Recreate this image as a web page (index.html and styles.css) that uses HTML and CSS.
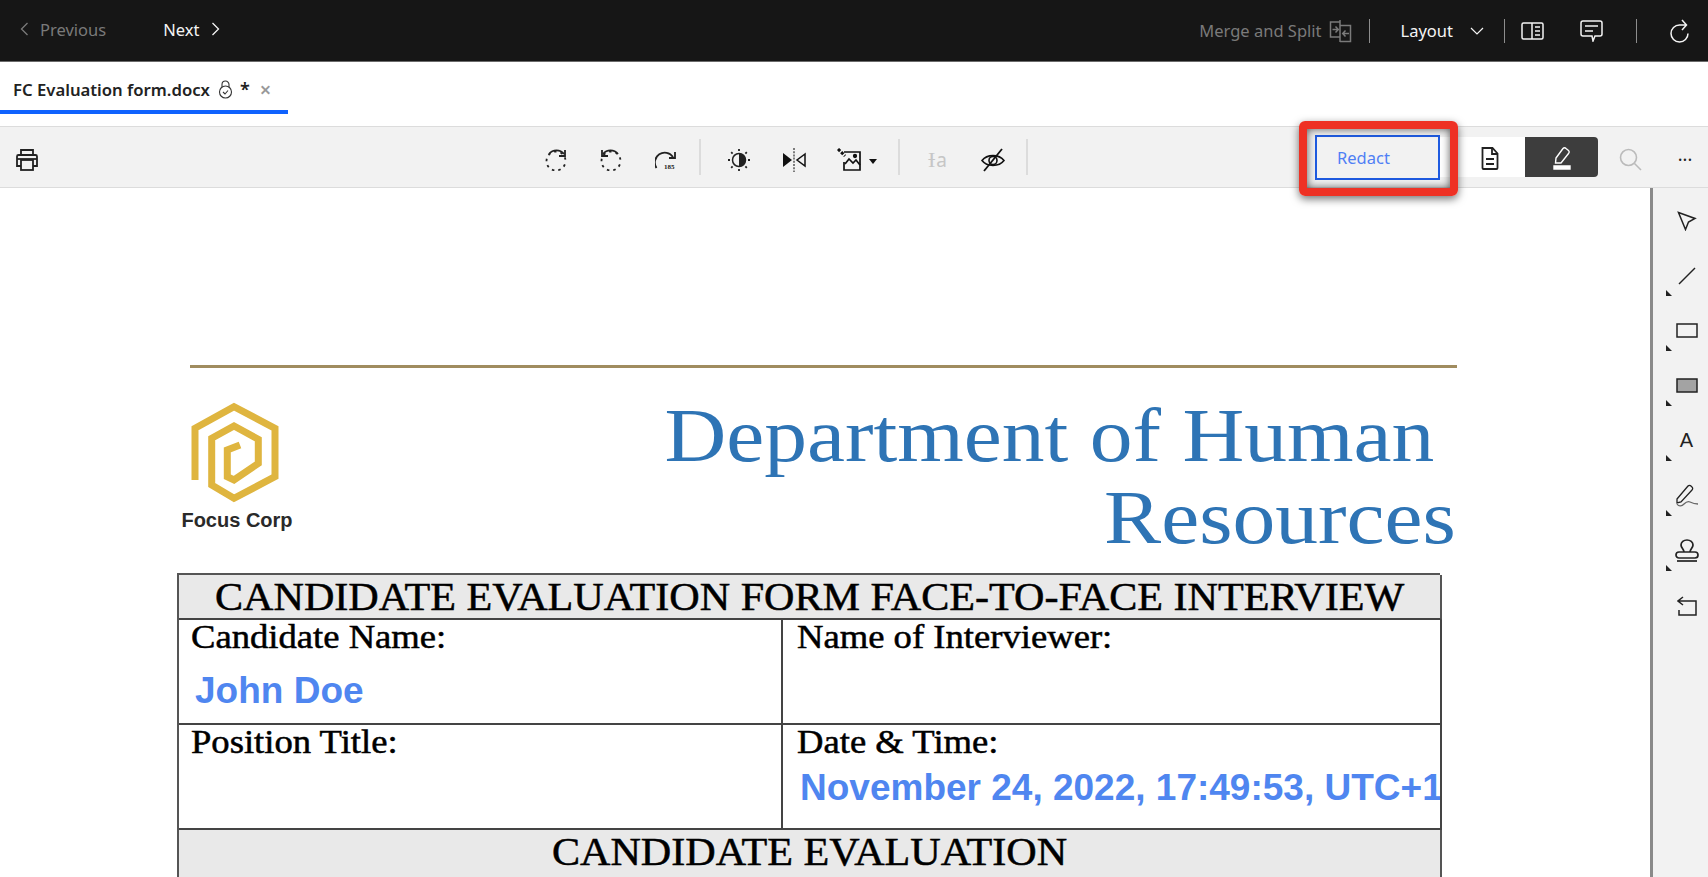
FILE: index.html
```html
<!DOCTYPE html>
<html lang="en">
<head>
  <meta charset="UTF-8">
  <title>FC Evaluation form.docx</title>
  <link rel="stylesheet" href="styles.css">
</head>
<body>
  <div class="app">
    <header class="topbar">
      <a class="nav-link muted prev"><svg width="9" height="14" viewBox="0 0 9 14"><path d="M7.500 1 1.500 7l6 6" fill="none" stroke="currentColor" stroke-width="1.300"/></svg><span>Previous</span></a>
      <a class="nav-link next"><span>Next</span><svg width="9" height="14" viewBox="0 0 9 14"><path d="M1.500 1l6 6-6 6" fill="none" stroke="currentColor" stroke-width="1.300"/></svg></a>

      <div class="top-right">
        <span class="muted merge-label">Merge and Split</span>
        <svg class="muted merge-icon" width="23" height="24" viewBox="0 0 23 24" fill="none" stroke="currentColor" stroke-width="1.500"><path d="M11 3H1.500v15H11M11 1v22M11 6.500h10.500v16H11"/><path d="M3.500 10.500H9M6.500 7.500l2.800 3-2.800 3M20 14.500h-6M16.500 11.500l-2.800 3 2.800 3"/></svg>
        <i class="top-sep"></i>
        <span class="layout-label">Layout</span>
        <svg class="layout-chevron" width="14" height="8" viewBox="0 0 14 8"><path d="M1 1l6 6 6-6" fill="none" stroke="currentColor" stroke-width="1.200"/></svg>
        <i class="top-sep"></i>
        <svg class="panel-icon" width="23" height="18" viewBox="0 0 23 18" fill="none" stroke="currentColor" stroke-width="1.500"><rect x="1" y="1" width="21" height="16" rx="1.500"/><path d="M11 1v16M14 5h5M14 9h5M14 13h5"/></svg>
        <svg class="comment-icon" width="23" height="22" viewBox="0 0 23 22" fill="none" stroke="currentColor" stroke-width="1.500"><path d="M3 1h17a2 2 0 0 1 2 2v11a2 2 0 0 1-2 2h-5l-2 5-1-5H3a2 2 0 0 1-2-2V3a2 2 0 0 1 2-2z"/><path d="M5 6h13M5 11h8"/></svg>
        <i class="top-sep"></i>
        <svg class="refresh-icon" width="20" height="25" viewBox="0 0 20 25" fill="none" stroke="currentColor" stroke-width="1.500"><path d="M18 15.500A8.500 8.500 0 1 1 9.500 7H16M12 2l4.500 5L12 12"/></svg>
      </div>
    </header>

    <div class="tabrow">
      <div class="tab">
        <span class="tab-name">FC Evaluation form.docx</span>
        <svg class="tab-lock" width="15" height="19" viewBox="0 0 15 19" fill="none" stroke="#333" stroke-width="1.100"><path d="M4 7V4.500a3.500 3.500 0 0 1 7 0V7"/><circle cx="7.500" cy="12" r="6"/><path d="M5 12l2 2 3-3.500"/></svg>
        <span class="tab-star">*</span>
        <span class="tab-close">×</span>
      </div>
    </div>

    <div class="toolbar">
      <div class="tool print"><svg width="24" height="24" viewBox="0 0 24 24" fill="none" stroke="#222" stroke-width="1.800"><path d="M6 7V2h12v5M6 18H2V8.500A1.500 1.500 0 0 1 3.500 7h17A1.500 1.500 0 0 1 22 8.500V18h-4"/><path d="M2 11h20"/><rect x="6" y="12" width="12" height="10"/></svg></div>

      <div class="tool-group">
        <div class="tool"><svg width="22" height="22" viewBox="0 0 22 22" fill="none" stroke="#222" stroke-width="1.800"><path d="M4 5a9.500 9.500 0 0 1 15 0"/><path d="M20 1v6h-6"/><circle cx="11" cy="12" r="9.500" stroke-dasharray="2.500 4" stroke-dashoffset="-10"/></svg></div>
        <div class="tool"><svg width="22" height="22" viewBox="0 0 22 22" fill="none" stroke="#222" stroke-width="1.800"><path d="M18 5A9.500 9.500 0 0 0 3 5"/><path d="M2 1v6h6"/><circle cx="11" cy="12" r="9.500" stroke-dasharray="2.500 4" stroke-dashoffset="-10"/></svg></div>
        <div class="tool"><svg width="22" height="20" viewBox="0 0 22 20" fill="none" stroke="#222" stroke-width="1.800"><path d="M1.500 18A9 9 0 0 1 18 7"/><path d="M20 2v6h-6"/><text class="angle-label" x="9" y="19">185</text></svg></div>
        <i class="tool-sep"></i>
      </div>

      <div class="tool-group">
        <div class="tool"><svg width="24" height="24" viewBox="0 0 24 24"><circle cx="12" cy="12" r="6.500" fill="none" stroke="#222" stroke-width="1.500"/><path d="M12 5.500a6.500 6.500 0 0 1 0 13z" fill="#222"/><path d="M12 1v2M12 21v2M1 12h2M21 12h2M4.200 4.200l1.400 1.400M18.400 18.400l1.400 1.400M4.200 19.800l1.400-1.400M18.400 5.600l1.400-1.400" stroke="#222" stroke-width="1.800"/></svg></div>
        <div class="tool"><svg width="24" height="24" viewBox="0 0 24 24"><path d="M1 5l9 7-9 7z" fill="#111"/><path d="M23 6l-8 6 8 6z" fill="none" stroke="#111" stroke-width="1.500"/><path d="M12 0v24" stroke="#555" stroke-width="1.500" stroke-dasharray="2 1.200"/></svg></div>
        <div class="tool tool-wide">
          <svg width="24" height="24" viewBox="0 0 24 24" fill="none" stroke="#111" stroke-width="1.700"><path d="M7 4h16v18H7v-8"/><path d="M8 16l4-5 4 4 3-3 4 5"/><circle cx="18" cy="8" r="1.300" fill="#111"/><path d="M1 1l7 7" stroke-width="3" stroke-dasharray="3 1.500"/></svg>
          <i class="caret"></i>
        </div>
        <i class="tool-sep"></i>
      </div>

      <div class="tool-group">
        <div class="tool font-tool"><span class="cursor-bar">Ɨ</span><span>a</span></div>
        <div class="tool"><svg width="24" height="24" viewBox="0 0 24 24" fill="none" stroke="#111" stroke-width="1.600"><path d="M1 12.500C6 6 18 6 23 12.500 18 19 6 19 1 12.500z"/><circle cx="12" cy="12.500" r="4"/><path d="M3 23 21 1" stroke-width="1.800"/></svg></div>
        <i class="tool-sep"></i>
      </div>

      <div class="tool-right">
        <div class="redact-wrap">
          <div class="redact-btn">Redact</div>
          <div class="redact-highlight"></div>
        </div>
        <div class="mode mode-doc"><svg width="18" height="23" viewBox="0 0 18 23" fill="none" stroke="#222" stroke-width="1.800"><path d="M1.500 1h10l5 5.500V21a1 1 0 0 1-1 1h-13a1 1 0 0 1-1-1z"/><path d="M11 1v6h6M5 12h8M5 17h8"/></svg></div>
        <div class="mode mode-redact"><svg width="18" height="24" viewBox="0 0 18 24" fill="none" stroke="#fff" stroke-width="1.400"><path d="M3 12 10 2.500a2 2 0 0 1 3 0l2.500 2a2 2 0 0 1 0 3L8 17H2.500z"/><path d="M1 20h16v3H1z" fill="#fff"/></svg></div>
        <div class="search-tool"><svg width="23" height="23" viewBox="0 0 23 23" fill="none" stroke="#bbb" stroke-width="1.600"><circle cx="9.500" cy="9.500" r="8"/><path d="M15.500 15.500 22 22"/></svg></div>
        <div class="more-tool">···</div>
      </div>
    </div>

    <div class="workspace">
      <main class="doc">
        <div class="doc-rule"></div>
        <div class="doc-head">
          <div class="logo">
            <svg width="90" height="102" viewBox="0 0 90 102"><path d="M5 78V26.300L44 4.700 85 26.300V74.700L44 96.300 21.700 83V36.300L44 24 68.300 37.300V61.300L44 78 37.300 74.700V48L50 43" fill="none" stroke="#dfb53f" stroke-width="7"/></svg>
            <div class="logo-name">Focus Corp</div>
          </div>
          <h1 class="doc-title">Department of Human&nbsp;<br>Resources</h1>
        </div>

        <div class="form-table">
          <div class="cell-band"><span class="band-text">CANDIDATE EVALUATION FORM FACE-TO-FACE INTERVIEW</span></div>
          <div class="cell">
            <div class="field-label">Candidate Name:</div>
            <div class="field-value name-value">John Doe</div>
          </div>
          <div class="cell cell-right">
            <div class="field-label">Name of Interviewer:</div>
          </div>
          <div class="cell">
            <div class="field-label">Position Title:</div>
          </div>
          <div class="cell cell-right">
            <div class="field-label">Date &amp; Time:</div>
            <div class="field-value date-value">November 24, 2022, 17:49:53, UTC+1</div>
          </div>
          <div class="cell-band section-band"><span class="band-text">CANDIDATE EVALUATION</span></div>
        </div>
      </main>

      <aside class="sidetools">
        <div class="side-tool"><svg width="20" height="20" viewBox="0 0 20 20" fill="none" stroke="#222" stroke-width="1.500"><path d="M1.500 1.500 18 7.500l-6.500 3.500-3 7.500z"/></svg></div>
        <div class="side-tool has-flyout"><svg width="20" height="20" viewBox="0 0 20 20" fill="none" stroke="#222" stroke-width="1.500"><path d="M2 18 18 2"/></svg></div>
        <div class="side-tool has-flyout"><svg width="22" height="15" viewBox="0 0 22 15" fill="none" stroke="#222" stroke-width="1.500"><rect x="1" y="1" width="20" height="13"/></svg></div>
        <div class="side-tool has-flyout"><svg width="22" height="15" viewBox="0 0 22 15" fill="#a3a3a3" stroke="#222" stroke-width="1.500"><rect x="1" y="1" width="20" height="13"/></svg></div>
        <div class="side-tool has-flyout side-letter">A</div>
        <div class="side-tool has-flyout"><svg width="24" height="24" viewBox="0 0 24 24" fill="none" stroke="#222" stroke-width="1.300"><path d="M2 15 13 2a2 2 0 0 1 3 0l1 1a2 2 0 0 1 0 3L6 18l-4 1z"/><path d="M2 20c2 3 5 2 7 0s4-3 6-2 4 2 8 2" stroke="#666"/></svg></div>
        <div class="side-tool has-flyout"><svg width="24" height="24" viewBox="0 0 24 24" fill="none" stroke="#222" stroke-width="1.700"><path d="M9 13c0-3-3-4-3-7a6 5 0 0 1 12 0c0 3-3 4-3 7"/><rect x="1" y="13" width="22" height="6" rx="3"/><path d="M2 22h20"/></svg></div>
        <div class="side-tool"><svg width="20" height="20" viewBox="0 0 20 20" fill="none" stroke="#222" stroke-width="1.500"><path d="M6 1 1 5l5 4M1 5h18v14H2v-5"/></svg></div>
      </aside>
    </div>
  </div>
</body>
</html>
```

FILE: styles.css
```css
* {
  box-sizing: border-box;
}

body {
  margin: 0;
  background: #fff;
  font-family: "Noto Sans", Arial, sans-serif;
  overflow: hidden;
}

.app {
  display: flex;
  flex-direction: column;
  height: 877px;
}

/* top bar */
.topbar {
  display: flex;
  align-items: center;
  height: 62px;
  flex-shrink: 0;
  background: #161616;
  border-bottom: 1px solid #6b6b6b;
  color: #f4f4f4;
  font-size: 16.500px;
}

.muted {
  color: #7a7a7a;
}

.nav-link {
  display: flex;
  align-items: center;
  gap: 11px;
  padding-bottom: 3px;
}

.prev {
  margin-left: 20px;
}

.next {
  margin-left: 57px;
  gap: 12px;
}

.top-right {
  display: flex;
  align-items: center;
  margin-left: auto;
  padding-right: 18px;
}

.merge-label {
  margin-right: -1px;
}

.merge-icon {
  margin-left: 8px;
}

.top-sep {
  width: 1px;
  height: 24px;
  background: #8d8d8d;
  margin-left: 17px;
}

.layout-label {
  margin-left: 31px;
}

.layout-chevron {
  margin-left: 17px;
  margin-right: 3px;
}

.panel-icon {
  margin-left: 16px;
}

.comment-icon {
  margin-left: 36px;
  margin-right: 16px;
}

.refresh-icon {
  margin-left: 33px;
}

/* tab row */
.tabrow {
  height: 65px;
  flex-shrink: 0;
  background: #fff;
  border-bottom: 1px solid #dcdcdc;
}

.tab {
  display: flex;
  align-items: center;
  width: 288px;
  height: 52px;
  padding: 6px 0 0 13px;
  border-bottom: 4px solid #0f62fe;
  color: #222;
}

.tab-name {
  font-size: 16.700px;
  font-weight: 600;
}

.tab-lock {
  margin-left: 8px;
}

.tab-star {
  margin-left: 7px;
  font-size: 18px;
  font-weight: 600;
}

.tab-close {
  margin-left: 10px;
  color: #999;
  font-size: 20px;
  font-weight: 600;
}

/* toolbar */
.toolbar {
  display: flex;
  align-items: center;
  height: 61px;
  flex-shrink: 0;
  background: #f2f2f2;
  border-bottom: 1px solid #dcdcdc;
}

.tool {
  display: flex;
  align-items: center;
  justify-content: center;
  width: 55px;
  height: 40px;
  padding-top: 6px;
}

.print {
  width: 24px;
  margin-left: 15px;
  margin-right: 489px;
}

.tool-group {
  display: flex;
  align-items: center;
}

.tool-wide {
  width: 71px;
  justify-content: flex-start;
  padding-left: 16px;
}

.tool-sep {
  width: 2px;
  height: 36px;
  background: #dcdcdc;
  margin: 0 10px 0 6px;
}

.angle-label {
  fill: #222;
  stroke: none;
  font-family: "Liberation Serif", serif;
  font-size: 7px;
  font-weight: 700;
}

.caret {
  width: 0;
  height: 0;
  margin-left: 8px;
  margin-top: 3px;
  border-left: 4.500px solid transparent;
  border-right: 4.500px solid transparent;
  border-top: 5px solid #111;
}

.font-tool {
  color: #c6c6c6;
  font-size: 19px;
  gap: 1px;
}

.cursor-bar {
  font-family: "Liberation Serif", serif;
  font-size: 22px;
}

.tool-right {
  display: flex;
  align-items: center;
  margin-left: auto;
}

.redact-wrap {
  position: relative;
}

.redact-btn {
  display: flex;
  align-items: center;
  width: 125px;
  height: 45px;
  padding-left: 20px;
  border: 2px solid #1f5be0;
  color: #4f7ff5;
  font-size: 16.500px;
}

.redact-highlight {
  position: absolute;
  top: -14px;
  right: -18px;
  bottom: -16px;
  left: -16px;
  border: 8px solid #ee3124;
  border-radius: 6px;
  box-shadow: 0 3px 9px rgba(0, 0, 0, 0.55), inset 0 0 9px rgba(0, 0, 0, 0.65);
}

.mode {
  display: flex;
  align-items: center;
  justify-content: center;
  height: 40px;
  padding-top: 2px;
}

.mode-doc {
  width: 85px;
  padding-left: 14px;
  background: #fff;
}

.mode-redact {
  width: 73px;
  background: #3d3d3d;
  border-radius: 0 4px 4px 0;
}

.search-tool {
  display: flex;
  justify-content: center;
  width: 64px;
  padding-top: 4px;
}

.more-tool {
  width: 46px;
  padding-top: 4px;
  text-align: center;
  color: #222;
  font-size: 18px;
}

/* workspace */
.workspace {
  display: flex;
  flex: 1;
  min-height: 0;
}

.doc {
  flex: 1;
  min-width: 0;
  overflow: hidden;
  padding: 177px 0 0 177px;
  background: #fff;
}

.doc-rule {
  width: 1267px;
  height: 3px;
  margin-left: 13px;
  background: #a08c5f;
}

.doc-head {
  display: flex;
  justify-content: space-between;
  width: 1279px;
  height: 205px;
}

.logo {
  width: 120px;
  padding-top: 34px;
  text-align: center;
}

.logo svg {
  display: block;
  margin-left: 13px;
}

.logo-name {
  margin-top: 5px;
  color: #2a2a2a;
  font-family: "Liberation Sans", Arial, sans-serif;
  font-size: 20px;
  font-weight: 700;
}

.doc-title {
  margin: 26px 0 0;
  color: #2e74b5;
  font-family: "Liberation Serif", serif;
  font-size: 76px;
  font-weight: 400;
  line-height: 82px;
  text-align: right;
  white-space: nowrap;
  transform: scaleX(1.126);
  transform-origin: right center;
}

.form-table {
  display: grid;
  grid-template-columns: 604px 659px;
  grid-template-rows: 45px 105px 105px 60px;
  width: 1263px;
  border-top: 2px solid #555;
  border-left: 2px solid #555;
  color: #000;
  font-family: "Liberation Serif", serif;
}

.cell-band {
  grid-column: 1 / 3;
  display: flex;
  justify-content: center;
  border-right: 2px solid #555;
  border-bottom: 2px solid #444;
  background: #e9e9e9;
}

.band-text {
  font-size: 39px;
  line-height: 43px;
  -webkit-text-stroke: 0.500px #000;
  white-space: nowrap;
  transform: scaleX(1.08);
}

.section-band {
  border-bottom: 0;
}

.cell {
  padding-left: 12px;
  border-right: 2px solid #444;
  border-bottom: 2px solid #444;
  overflow: hidden;
}

.cell-right {
  padding-left: 14px;
}

.field-label {
  font-size: 33px;
  font-weight: 400;
  line-height: 34px;
  -webkit-text-stroke: 0.500px #000;
  transform: scaleX(1.11);
  transform-origin: left center;
}

.field-value {
  color: #4f86f0;
  font-family: "Liberation Sans", Arial, sans-serif;
  font-weight: 700;
  white-space: nowrap;
}

.name-value {
  margin: 16px 0 0 4px;
  font-size: 37px;
}

.date-value {
  margin: 8px 0 0 3px;
  font-size: 37px;
}

/* right tool strip */
.sidetools {
  display: flex;
  flex-direction: column;
  width: 58px;
  padding-top: 5px;
  flex-shrink: 0;
  background: #f2f2f2;
  border-left: 3px solid #8a8a8a;
}

.side-tool {
  position: relative;
  display: flex;
  align-items: center;
  justify-content: center;
  height: 55px;
  padding-left: 12px;
  color: #222;
}

.side-letter {
  font-family: "Liberation Sans", Arial, sans-serif;
  font-size: 20px;
}

.has-flyout::after {
  content: "";
  position: absolute;
  left: 13px;
  bottom: 7px;
  border-left: 6px solid #222;
  border-top: 6px solid transparent;
}
```
